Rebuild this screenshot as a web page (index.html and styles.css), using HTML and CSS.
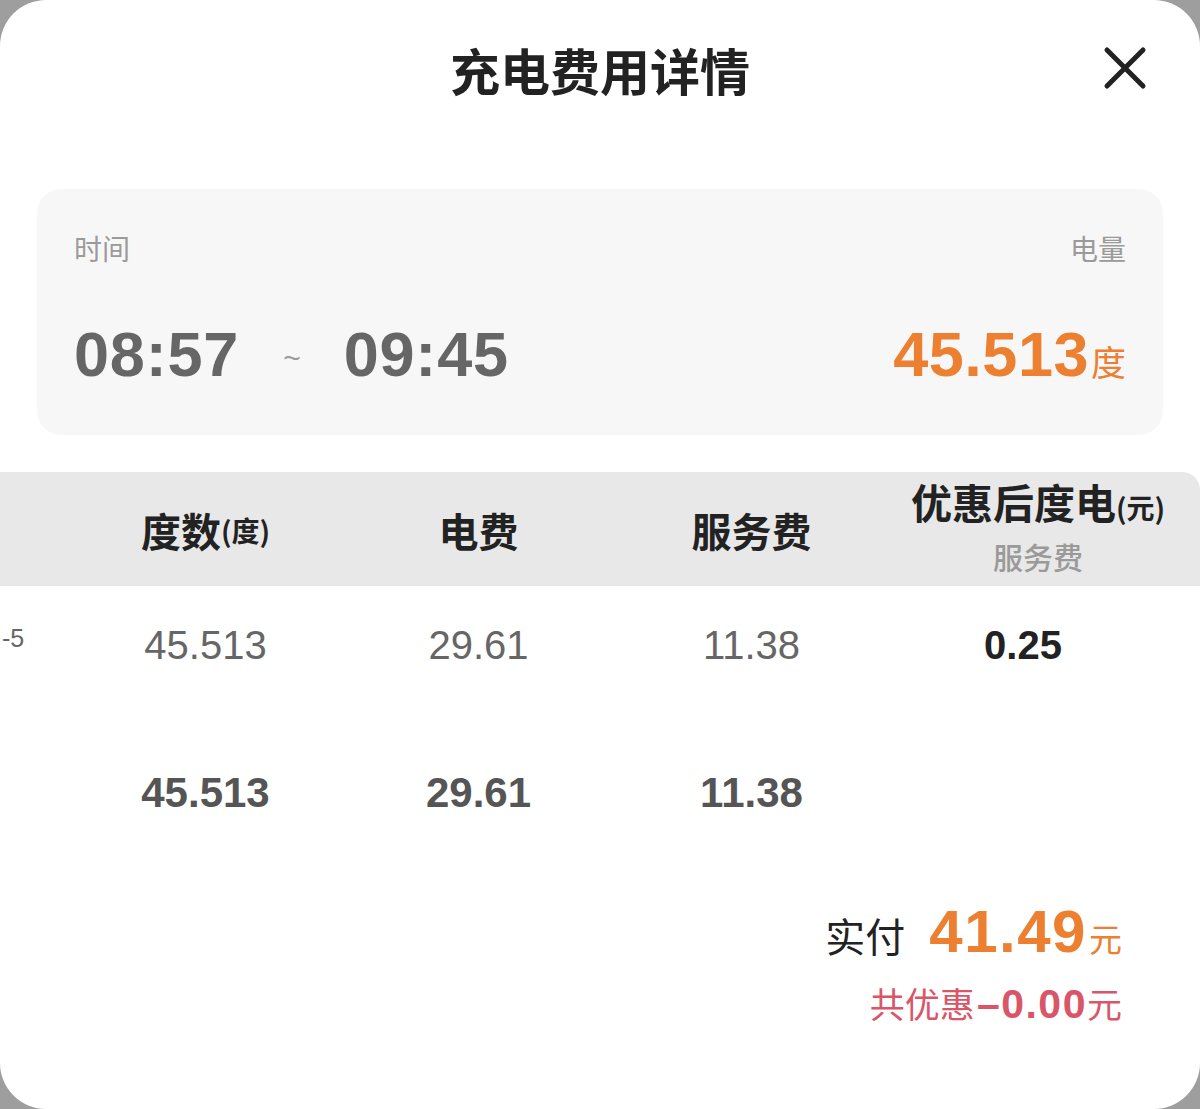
FILE: index.html
```html
<!DOCTYPE html>
<html lang="zh-CN">
<head>
<meta charset="utf-8">
<title>充电费用详情</title>
<link rel="stylesheet" href="styles.css">
</head>
<body>
<div class="sheet">
  <header class="head">
    <h1 class="title">充电费用详情</h1>
    <button class="close" aria-label="关闭">
      <svg width="44" height="44" viewBox="0 0 44 44"><path d="M4 4 L40 40 M40 4 L4 40" stroke="#222" stroke-width="5" stroke-linecap="round" fill="none"/></svg>
    </button>
  </header>

  <section class="card">
    <div class="card-labels">
      <span>时间</span>
      <span>电量</span>
    </div>
    <div class="card-values">
      <div class="times">
        <span class="time">08:57</span>
        <span class="tilde">~</span>
        <span class="time">09:45</span>
      </div>
      <div class="energy"><span class="energy-num">45.513</span><span class="energy-unit">度</span></div>
    </div>
  </section>

  <section class="table">
    <div class="thead">
      <div class="cell c0"></div>
      <div class="cell c1"><span class="th">度数</span><span class="th-unit">(度)</span></div>
      <div class="cell c2"><span class="th">电费</span></div>
      <div class="cell c3"><span class="th">服务费</span></div>
      <div class="cell c4 stack"><div><span class="th th-big">优惠后度电</span><span class="th-unit">(元)</span></div><div class="th-sub">服务费</div></div>
    </div>
    <div class="row">
      <div class="cell c0 cut">-5</div>
      <div class="cell c1">45.513</div>
      <div class="cell c2">29.61</div>
      <div class="cell c3">11.38</div>
      <div class="cell c4 strong">0.25</div>
    </div>
    <div class="row total-row">
      <div class="cell c0"></div>
      <div class="cell c1">45.513</div>
      <div class="cell c2">29.61</div>
      <div class="cell c3">11.38</div>
      <div class="cell c4"></div>
    </div>
  </section>

  <section class="summary">
    <div class="paid"><span class="paid-label">实付</span><span class="paid-num">41.49</span><span class="paid-unit">元</span></div>
    <div class="discount"><span>共优惠</span><span class="disc-num">–0.00</span><span>元</span></div>
  </section>
</div>
</body>
</html>
```

FILE: styles.css
```css
* { box-sizing: border-box; }
html, body { margin: 0; padding: 0; }
body {
  background: #9e9e9e;
  font-family: "Liberation Sans", "Noto Sans CJK SC", sans-serif;
  width: 1200px;
  height: 1109px;
  overflow: hidden;
}
.sheet {
  background: #fff;
  width: 1200px;
  height: 1109px;
  border-radius: 46px;
  overflow: hidden;
}
.head {
  position: relative;
  height: 144px;
  display: flex;
  align-items: center;
  justify-content: center;
  padding-bottom: 6px;
}
.title {
  margin: 0;
  font-size: 50px;
  font-weight: 700;
  color: #222;
  line-height: 60px;
  font-family: "Noto Sans CJK SC", sans-serif;
  letter-spacing: 0;
}
.close {
  position: absolute;
  right: 53px;
  top: 46px;
  width: 44px;
  height: 44px;
  padding: 0;
  border: 0;
  background: none;
  display: flex;
}
.card {
  margin: 45px 37px 0;
  height: 246px;
  background: #f7f7f7;
  border-radius: 24px;
  padding: 44px 37px 0;
}
.card-labels {
  display: flex;
  justify-content: space-between;
  font-family: "Noto Sans CJK SC", sans-serif;
  font-size: 28px;
  line-height: 30px;
  color: #9a9a9a;
}
.card-values {
  margin-top: 55px;
  display: flex;
  justify-content: space-between;
  align-items: baseline;
  height: 72px;
}
.times { display: flex; align-items: baseline; }
.time {
  font-size: 63px;
  font-weight: 700;
  color: #666;
  line-height: 72px;
  letter-spacing: 0.8px;
}
.tilde {
  font-size: 30px;
  color: #9a9a9a;
  margin: 0 43px 0 44px;
  position: relative;
  top: -8px;
}
.energy { display: flex; align-items: baseline; }
.energy-num {
  font-size: 63px;
  font-weight: 700;
  color: #ec7f30;
  line-height: 72px;
  letter-spacing: 0.5px;
}
.energy-unit {
  font-family: "Noto Sans CJK SC", sans-serif;
  font-size: 35px;
  color: #ec7f30;
  margin-left: 2px;
}
.table { margin-top: 37px; }
.thead {
  display: flex;
  height: 114px;
  background: #e8e8e8;
  border-top-right-radius: 18px;
  font-family: "Noto Sans CJK SC", sans-serif;
  color: #222;
}
.cell {
  display: flex;
  align-items: center;
  justify-content: center;
  flex: none;
}
.c0 { width: 69px; justify-content: flex-start; }
.c1, .c2, .c3 { width: 273px; }
.c4 { width: 300px; }
.th { font-size: 40px; font-weight: 700; line-height: 46px; }
.th-big { font-size: 41px; }
.th-unit { font-size: 28px; font-weight: 700; }
.thead .c1, .thead .c2, .thead .c3 { padding-top: 2px; }
.stack { flex-direction: column; }
.stack > div:first-child { display: flex; align-items: baseline; margin-top: -4px; }
.th-sub { font-size: 30px; color: #9a9a9a; font-weight: 500; line-height: 40px; margin-top: 9px; }
.row {
  display: flex;
  height: 118px;
  font-size: 40px;
  color: #666;
}
.row .c4 { padding-right: 30px; }
.strong { font-weight: 700; color: #222; }
.cut {
  font-size: 25px;
  color: #666;
  padding-left: 2px;
  padding-bottom: 14px;
}
.total-row {
  margin-top: 30px;
  font-weight: 700;
  font-size: 42px;
  color: #555;
}
.summary {
  margin-top: 45px;
  padding-right: 78px;
  display: flex;
  flex-direction: column;
  align-items: flex-end;
}
.paid {
  display: flex;
  align-items: baseline;
  height: 70px;
}
.paid-label {
  font-family: "Noto Sans CJK SC", sans-serif;
  font-size: 40px;
  color: #222;
  margin-right: 24px;
}
.paid-num {
  font-size: 60px;
  font-weight: 700;
  color: #ec7f30;
  line-height: 70px;
  letter-spacing: 1.5px;
}
.paid-unit {
  font-family: "Noto Sans CJK SC", sans-serif;
  font-size: 33px;
  color: #ec7f30;
  margin-left: 2px;
}
.discount {
  margin-top: 11px;
  display: flex;
  align-items: baseline;
  font-family: "Noto Sans CJK SC", sans-serif;
  font-size: 35px;
  color: #d95668;
  line-height: 50px;
}
.disc-num {
  font-family: "Liberation Sans", sans-serif;
  font-size: 41px;
  font-weight: 700;
  letter-spacing: 1.5px;
  margin-left: 2px;
}
```
